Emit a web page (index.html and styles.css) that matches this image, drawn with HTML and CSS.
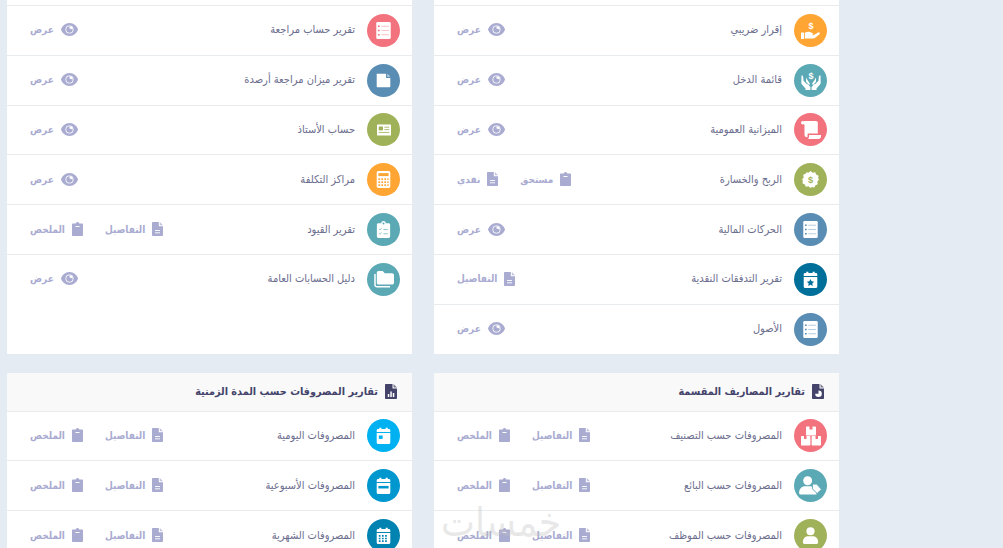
FILE: index.html
```html
<!DOCTYPE html>
<html lang="ar" dir="rtl">
  <head>
    <meta charset="UTF-8" />
    <title>التقارير</title>
    <link rel="stylesheet" href="styles.css">
  </head>
  <body>
    <svg class="sprites" xmlns="http://www.w3.org/2000/svg">
      <symbol id="i-hand" viewBox="0 0 20 20">
        <path fill="#fff" d="M0 12.500h3.200v6.500H0zM4 12.800c1.600-1.300 3.400-1.500 5-.7l2.300.8c1.200.5.800 2.200-.4 2l-2.400-.3 3 .6c.9.100 1.500-.1 2.200-.6l3.400-2.100c1.400-.7 2.400.9 1.400 1.800l-4.300 3.500c-.7.500-1.400.7-2.300.7H4z"/>
        <text x="10" y="9" class="glyph">$</text>
      </symbol>
      <symbol id="i-hands" viewBox="0 0 20 20">
        <path fill="#fff" d="M.5 5.500c.9-.3 1.500.3 1.600 1l.4 4.300 3.200 3.300c.6-.1 1.200.2 1.700.7l2 2.200V20H4.500v-1.500L1 14.500c-.4-.5-.7-1.100-.7-1.800zM19.500 5.500c-.9-.3-1.500.3-1.600 1l-.4 4.300-3.200 3.300c-.6-.1-1.200.2-1.700.7l-2 2.200V20h4.900v-1.500l3.500-4c.4-.5.7-1.100.7-1.800z"/>
        <path fill="#fff" d="M5 7.500l1.800 3 2.200 3.200-1 1.300-3-3.300zM15 7.500l-1.800 3-2.200 3.200 1 1.300 3-3.300z"/>
        <text x="10" y="8.500" class="glyph">$</text>
      </symbol>
      <symbol id="i-scroll" viewBox="0 0 20 20">
        <circle cx="1.800" cy="2.800" r="1.800" fill="#fff"/>
        <path fill="#fff" d="M3 1h12c1 0 1.800.8 1.800 1.800V13.500H7.500c-.6 0-1 .4-1 1v2.800c-1.800 0-3-.8-3-2.500V4.600H3z"/>
        <path fill="#fff" d="M8 15h12v1.500c0 1.400-1 2.500-2.500 2.500H7c.7-.6 1-1.400 1-2.200z"/>
      </symbol>
      <symbol id="i-badge" viewBox="0 0 20 20">
        <path fill="#fff" d="M10 0l2.500 2 3-.6 1.200 2.800 2.800 1.300-.6 3L20 10l-2 2.500.6 3-2.800 1.200-1.200 2.800-3-.6L10 20l-2.500-2-3 .6-1.200-2.800L.5 14.500l.6-3L0 10l2-2.500-.6-3 2.800-1.200L5.500 1.400l2 .6z"/>
        <text x="10" y="14" class="glyph glyph-color">$</text>
      </symbol>
      <symbol id="i-list" viewBox="0 0 20 20">
        <rect x="1.500" y="0" width="17" height="20" rx="1.500" fill="#fff"/>
        <path stroke="currentColor" stroke-width="1.500" d="M3.500 5h2M3.500 10h2M3.500 15h2"/>
        <path stroke="currentColor" stroke-width="1" opacity=".5" d="M7.500 5h9M7.500 10h9M7.500 15h9"/>
      </symbol>
      <symbol id="i-file" viewBox="0 0 20 20">
        <path fill="#fff" d="M2 2h11v5h5v10c0 .6-.4 1-1 1H3c-.6 0-1-.4-1-1z"/>
        <path fill="#fff" opacity=".65" d="M14.500 2L18 5.500h-3.500z"/>
      </symbol>
      <symbol id="i-card" viewBox="0 0 20 20">
        <rect y="2" width="20" height="16" rx="1" fill="#fff"/>
        <rect x="2.500" y="5" width="6" height="5.500" fill="currentColor"/>
        <path stroke="currentColor" stroke-width="1.200" d="M10.500 6h7M10.500 9.500h7M2.500 13.500h15"/>
      </symbol>
      <symbol id="i-calc" viewBox="0 0 20 20">
        <rect x="2" y="0" width="16" height="20" rx="2" fill="#fff"/>
        <rect x="4" y="2.500" width="12" height="3.500" fill="currentColor"/>
        <path stroke="currentColor" stroke-width="2" stroke-dasharray="2 1.500" d="M4 9.500h12M4 13h12M4 16.500h12"/>
      </symbol>
      <symbol id="i-clip" viewBox="0 0 20 20">
        <path fill="#fff" d="M4 2.500h3.200C7.500 1 8.600 0 10 0s2.500 1 2.800 2.500H16c1 0 1.800.8 1.800 1.800V18c0 1-.8 2-1.800 2H4c-1 0-1.800-1-1.800-2V4.300c0-1 .8-1.800 1.800-1.800z"/>
        <circle cx="10" cy="3" r="1.200" fill="currentColor"/>
        <path stroke="currentColor" stroke-width=".8" fill="none" d="M5 9.500l1 1 1.800-2M5 14.500l1 1 1.800-2M10 10h5M10 15h5"/>
      </symbol>
      <symbol id="i-folders" viewBox="0 0 20 20">
        <path fill="none" stroke="#fff" stroke-width="1.500" d="M1 5v11c0 1 .6 1.700 1.700 1.700H16"/>
        <path fill="#fff" d="M4.500 2h4.200l2 2.200h7.300c1 0 2 .8 2 1.800v7.700c0 1-1 1.800-2 1.800H4.500c-1 0-1.700-.8-1.700-1.800V3.800c0-1 .7-1.800 1.700-1.800z"/>
      </symbol>
      <symbol id="i-cal-star" viewBox="0 0 20 20">
        <path fill="#fff" d="M2 4c0-1 .8-1.700 1.700-1.700h1.300V.8h2.500v1.500h5V.8H15v1.500h1.300C17.200 2.300 18 3 18 4v2H2zM2 7.200h16v11c0 1-.8 1.800-1.800 1.800H3.800C2.800 20 2 19.200 2 18.200z"/>
        <path fill="currentColor" d="M10 9.500l1.300 2.700 3 .4-2.200 2 .6 3-2.700-1.500-2.700 1.500.6-3-2.200-2 3-.4z"/>
      </symbol>
      <symbol id="i-cal-day" viewBox="0 0 20 20">
        <path fill="#fff" d="M2 4c0-1 .8-1.700 1.700-1.700h1.300V.8h2.500v1.500h5V.8H15v1.500h1.300C17.200 2.300 18 3 18 4v2H2zM2 7.200h16v11c0 1-.8 1.800-1.800 1.800H3.800C2.800 20 2 19.200 2 18.200z"/>
        <rect x="4.500" y="10" width="4.500" height="4" fill="currentColor"/>
      </symbol>
      <symbol id="i-cal-week" viewBox="0 0 20 20">
        <path fill="#fff" d="M2 4c0-1 .8-1.700 1.700-1.700h1.300V.8h2.500v1.500h5V.8H15v1.500h1.300C17.200 2.300 18 3 18 4v2H2zM2 7.200h16v11c0 1-.8 1.800-1.800 1.800H3.800C2.800 20 2 19.200 2 18.200z"/>
        <rect x="4" y="10.500" width="12" height="3" fill="currentColor"/>
      </symbol>
      <symbol id="i-cal-month" viewBox="0 0 20 20">
        <path fill="#fff" d="M2 4c0-1 .8-1.700 1.700-1.700h1.300V.8h2.500v1.500h5V.8H15v1.500h1.300C17.200 2.300 18 3 18 4v2H2zM2 7.200h16v11c0 1-.8 1.800-1.800 1.800H3.800C2.800 20 2 19.200 2 18.200z"/>
        <path stroke="currentColor" stroke-width="2" stroke-dasharray="2 1.700" d="M4.500 10.500h11M4.500 13.500h11M4.500 16.500h11"/>
      </symbol>
      <symbol id="i-boxes" viewBox="0 0 20 20">
        <path fill="#fff" d="M6 .5h2.500v3h3v-3H14c.6 0 1 .4 1 1v7c0 .6-.4 1-1 1H6c-.6 0-1-.4-1-1v-7c0-.6.4-1 1-1zM1 10h2v3h2.500v-3h2.900c.6 0 1 .4 1 1v7.500c0 .6-.4 1-1 1H1c-.6 0-1-.4-1-1V11c0-.6.4-1 1-1zM11.600 10h2.900v3H17v-3h2c.6 0 1 .4 1 1v7.500c0 .6-.4 1-1 1h-7.400c-.6 0-1-.4-1-1V11c0-.6.4-1 1-1z"/>
      </symbol>
      <symbol id="i-user-tag" viewBox="0 0 24 20">
        <circle cx="9" cy="5" r="4.700" fill="#fff"/>
        <path fill="#fff" d="M0 17.500c0-4 3-6.700 6-6.700h6c1 0 2 .2 2.800.7l2.500 2.500 1 5.500H2c-1.200 0-2-.8-2-2z"/>
        <path fill="#fff" stroke="currentColor" stroke-width="1" d="M14 8.500h4.500l5 5.500-4.500 4.500-5-5z"/>
      </symbol>
      <symbol id="i-user" viewBox="0 0 20 20">
        <circle cx="10" cy="5" r="4.800" fill="#fff"/>
        <path fill="#fff" d="M1 18c0-4 2.500-7 6-7h6c3.500 0 6 3 6 7 0 1.200-.8 2-2 2H3c-1.200 0-2-.8-2-2z"/>
      </symbol>
      <symbol id="i-eye" viewBox="0 0 17 13">
        <path fill="currentColor" d="M8.500 0C12.800 0 16 3 17 6.500 16 10 12.800 13 8.500 13S1 10 0 6.500C1 3 4.200 0 8.500 0z"/>
        <circle cx="8.500" cy="6.500" r="4" fill="#fff"/>
        <circle cx="8.500" cy="6.500" r="3.200" fill="currentColor"/>
        <path fill="#fff" d="M8.500 3.300a3.200 3.200 0 0 1 3.200 3.200l-3.200-1z"/>
      </symbol>
      <symbol id="i-doc" viewBox="0 0 11 14">
        <path fill="currentColor" d="M1 0h5.800v4.200H11V13c0 .6-.4 1-1 1H1c-.6 0-1-.4-1-1V1c0-.6.4-1 1-1z"/>
        <path fill="currentColor" opacity=".7" d="M7.800 0L11 3.200H7.800z"/>
        <path stroke="#fff" stroke-width=".9" d="M3 8.500h5M3 10.800h5"/>
      </symbol>
      <symbol id="i-board" viewBox="0 0 11 14">
        <path fill="currentColor" d="M1 1.500h2.700C4 .6 4.700 0 5.500 0s1.500.6 1.800 1.500H10c.6 0 1 .4 1 1V13c0 .6-.4 1-1 1H1c-.6 0-1-.4-1-1V2.500c0-.6.4-1 1-1z"/>
        <path stroke="#fff" stroke-width="1" d="M3.500 4.500h4"/>
      </symbol>
      <symbol id="i-doc-chart" viewBox="0 0 12 15">
        <path fill="currentColor" d="M1 0h6.500v4.500H12V14c0 .6-.4 1-1 1H1c-.6 0-1-.4-1-1V1c0-.6.4-1 1-1z"/>
        <path fill="currentColor" opacity=".7" d="M8.500 0L12 3.500H8.500z"/>
        <path fill="#fff" d="M2.800 10h1.500v3H2.800zM5.300 7.500h1.500V13H5.300zM7.800 9h1.500v4H7.800z"/>
      </symbol>
      <symbol id="i-doc-pie" viewBox="0 0 12 15">
        <path fill="currentColor" d="M1 0h6.500v4.500H12V14c0 .6-.4 1-1 1H1c-.6 0-1-.4-1-1V1c0-.6.4-1 1-1z"/>
        <path fill="currentColor" opacity=".7" d="M8.500 0L12 3.500H8.500z"/>
        <path fill="#fff" d="M6.500 6.500a3.300 3.300 0 1 1-3.300 3.300h3.300z"/>
      </symbol>
    </svg>

    <main class="page">
      <section class="card">
        <div class="row-cut"></div>
        <div class="row">
          <span class="round orange"><svg class="glyph-icon large"><use href="#i-hand"/></svg></span>
          <span class="title">إقرار ضريبي</span>
          <div class="actions">
            <a class="action"><svg class="eye"><use href="#i-eye"/></svg>عرض</a>
          </div>
        </div>
        <div class="row">
          <span class="round teal"><svg class="glyph-icon large"><use href="#i-hands"/></svg></span>
          <span class="title">قائمة الدخل</span>
          <div class="actions">
            <a class="action"><svg class="eye"><use href="#i-eye"/></svg>عرض</a>
          </div>
        </div>
        <div class="row">
          <span class="round pink"><svg class="glyph-icon large"><use href="#i-scroll"/></svg></span>
          <span class="title">الميزانية العمومية</span>
          <div class="actions">
            <a class="action"><svg class="eye"><use href="#i-eye"/></svg>عرض</a>
          </div>
        </div>
        <div class="row">
          <span class="round olive"><svg class="glyph-icon"><use href="#i-badge"/></svg></span>
          <span class="title">الربح والخسارة</span>
          <div class="actions">
            <a class="action"><svg class="doc"><use href="#i-board"/></svg>مستحق</a>
            <a class="action"><svg class="doc"><use href="#i-doc"/></svg>نقدي</a>
          </div>
        </div>
        <div class="row">
          <span class="round steel"><svg class="glyph-icon"><use href="#i-list"/></svg></span>
          <span class="title">الحركات المالية</span>
          <div class="actions">
            <a class="action"><svg class="eye"><use href="#i-eye"/></svg>عرض</a>
          </div>
        </div>
        <div class="row">
          <span class="round deep"><svg class="glyph-icon"><use href="#i-cal-star"/></svg></span>
          <span class="title">تقرير التدفقات النقدية</span>
          <div class="actions">
            <a class="action"><svg class="doc"><use href="#i-doc"/></svg>التفاصيل</a>
          </div>
        </div>
        <div class="row">
          <span class="round steel"><svg class="glyph-icon"><use href="#i-list"/></svg></span>
          <span class="title">الأصول</span>
          <div class="actions">
            <a class="action"><svg class="eye"><use href="#i-eye"/></svg>عرض</a>
          </div>
        </div>
      </section>

      <section class="card">
        <div class="row-cut"></div>
        <div class="row">
          <span class="round pink"><svg class="glyph-icon"><use href="#i-list"/></svg></span>
          <span class="title">تقرير حساب مراجعة</span>
          <div class="actions">
            <a class="action"><svg class="eye"><use href="#i-eye"/></svg>عرض</a>
          </div>
        </div>
        <div class="row">
          <span class="round steel"><svg class="glyph-icon"><use href="#i-file"/></svg></span>
          <span class="title">تقرير ميزان مراجعة أرصدة</span>
          <div class="actions">
            <a class="action"><svg class="eye"><use href="#i-eye"/></svg>عرض</a>
          </div>
        </div>
        <div class="row">
          <span class="round olive"><svg class="glyph-icon small"><use href="#i-card"/></svg></span>
          <span class="title">حساب الأستاذ</span>
          <div class="actions">
            <a class="action"><svg class="eye"><use href="#i-eye"/></svg>عرض</a>
          </div>
        </div>
        <div class="row">
          <span class="round orange"><svg class="glyph-icon"><use href="#i-calc"/></svg></span>
          <span class="title">مراكز التكلفة</span>
          <div class="actions">
            <a class="action"><svg class="eye"><use href="#i-eye"/></svg>عرض</a>
          </div>
        </div>
        <div class="row">
          <span class="round teal"><svg class="glyph-icon"><use href="#i-clip"/></svg></span>
          <span class="title">تقرير القيود</span>
          <div class="actions">
            <a class="action"><svg class="doc"><use href="#i-doc"/></svg>التفاصيل</a>
            <a class="action"><svg class="doc"><use href="#i-board"/></svg>الملخص</a>
          </div>
        </div>
        <div class="row">
          <span class="round teal"><svg class="glyph-icon large"><use href="#i-folders"/></svg></span>
          <span class="title">دليل الحسابات العامة</span>
          <div class="actions">
            <a class="action"><svg class="eye"><use href="#i-eye"/></svg>عرض</a>
          </div>
        </div>
      </section>

      <section class="card">
        <h2 class="card-head"><svg class="head-icon"><use href="#i-doc-pie"/></svg>تقارير المصاريف المقسمة</h2>
        <div class="row">
          <span class="round pink"><svg class="glyph-icon large"><use href="#i-boxes"/></svg></span>
          <span class="title">المصروفات حسب التصنيف</span>
          <div class="actions">
            <a class="action"><svg class="doc"><use href="#i-doc"/></svg>التفاصيل</a>
            <a class="action"><svg class="doc"><use href="#i-board"/></svg>الملخص</a>
          </div>
        </div>
        <div class="row">
          <span class="round teal"><svg class="glyph-icon wide"><use href="#i-user-tag"/></svg></span>
          <span class="title">المصروفات حسب البائع</span>
          <div class="actions">
            <a class="action"><svg class="doc"><use href="#i-doc"/></svg>التفاصيل</a>
            <a class="action"><svg class="doc"><use href="#i-board"/></svg>الملخص</a>
          </div>
        </div>
        <div class="row">
          <span class="round olive"><svg class="glyph-icon"><use href="#i-user"/></svg></span>
          <span class="title">المصروفات حسب الموظف</span>
          <div class="actions">
            <a class="action"><svg class="doc"><use href="#i-doc"/></svg>التفاصيل</a>
            <a class="action"><svg class="doc"><use href="#i-board"/></svg>الملخص</a>
          </div>
        </div>
      </section>

      <section class="card">
        <h2 class="card-head"><svg class="head-icon"><use href="#i-doc-chart"/></svg>تقارير المصروفات حسب المدة الزمنية</h2>
        <div class="row">
          <span class="round cyan"><svg class="glyph-icon"><use href="#i-cal-day"/></svg></span>
          <span class="title">المصروفات اليومية</span>
          <div class="actions">
            <a class="action"><svg class="doc"><use href="#i-doc"/></svg>التفاصيل</a>
            <a class="action"><svg class="doc"><use href="#i-board"/></svg>الملخص</a>
          </div>
        </div>
        <div class="row">
          <span class="round sky"><svg class="glyph-icon"><use href="#i-cal-week"/></svg></span>
          <span class="title">المصروفات الأسبوعية</span>
          <div class="actions">
            <a class="action"><svg class="doc"><use href="#i-doc"/></svg>التفاصيل</a>
            <a class="action"><svg class="doc"><use href="#i-board"/></svg>الملخص</a>
          </div>
        </div>
        <div class="row">
          <span class="round ocean"><svg class="glyph-icon"><use href="#i-cal-month"/></svg></span>
          <span class="title">المصروفات الشهرية</span>
          <div class="actions">
            <a class="action"><svg class="doc"><use href="#i-doc"/></svg>التفاصيل</a>
            <a class="action"><svg class="doc"><use href="#i-board"/></svg>الملخص</a>
          </div>
        </div>
      </section>
    </main>

    <div class="watermark">خمسات</div>
  </body>
</html>
```

FILE: styles.css
```css
body {
  margin: 0;
  height: 548px;
  overflow: hidden;
  position: relative;
  background-color: #e4ebf3;
  font-family: "DejaVu Sans Condensed", "DejaVu Sans", sans-serif;
  color: #6b6d8e;
}
.sprites {
  display: none;
}
.page {
  display: grid;
  grid-template-columns: 405px 405px;
  grid-auto-rows: max-content;
  column-gap: 22px;
  row-gap: 19px;
  padding: 0 164px 0 7px;
}
.card {
  background-color: #fff;
}
.card:nth-child(-n + 2) {
  height: 354px;
}
.row-cut {
  height: 5px;
}
.card-head {
  display: flex;
  align-items: center;
  gap: 7px;
  height: 37.6px;
  margin: 0;
  padding: 0 15px;
  background-color: #f9f9f9;
  font-size: 10.8px;
  font-weight: 700;
  color: #44446b;
}
.head-icon {
  width: 12px;
  height: 15px;
  color: #44446b;
}
.row {
  display: flex;
  align-items: center;
  box-sizing: border-box;
  height: 49.8px;
  padding: 0 12px 0 23px;
  border-top: 1px solid #e9ecef;
}
.round {
  display: flex;
  align-items: center;
  justify-content: center;
  flex: none;
  width: 33px;
  height: 33px;
  margin-left: 12px;
  border-radius: 50%;
}
.orange { background-color: #ffa534; color: #ffa534; }
.teal { background-color: #5ba9b4; color: #5ba9b4; }
.pink { background-color: #f2727d; color: #f2727d; }
.olive { background-color: #a0b259; color: #a0b259; }
.steel { background-color: #5a8db4; color: #5a8db4; }
.deep { background-color: #006f99; color: #006f99; }
.cyan { background-color: #00b1f2; color: #00b1f2; }
.sky { background-color: #0097cf; color: #0097cf; }
.ocean { background-color: #0083b0; color: #0083b0; }
.glyph-icon {
  width: 17px;
  height: 17px;
}
.glyph-icon.large {
  width: 20px;
  height: 20px;
}
.glyph-icon.small {
  width: 14px;
  height: 14px;
}
.glyph-icon.wide {
  width: 23px;
  height: 19px;
}
.glyph {
  font-family: "Liberation Sans", sans-serif;
  font-size: 9px;
  font-weight: 700;
  text-anchor: middle;
  fill: #fff;
}
.glyph-color {
  font-size: 11px;
  fill: #a0b259;
}
.title {
  padding-bottom: 1px;
  font-size: 11px;
}
.actions {
  display: flex;
  gap: 22px;
  margin-right: auto;
  padding-bottom: 1px;
}
.action {
  display: flex;
  align-items: center;
  gap: 7px;
  font-size: 10px;
  font-weight: 700;
  color: #a9abd1;
}
.eye {
  width: 17px;
  height: 13px;
}
.doc {
  width: 11px;
  height: 14px;
}
.watermark {
  position: absolute;
  left: 441px;
  top: 499px;
  font-size: 40px;
  color: rgba(190, 190, 190, 0.35);
}
```
